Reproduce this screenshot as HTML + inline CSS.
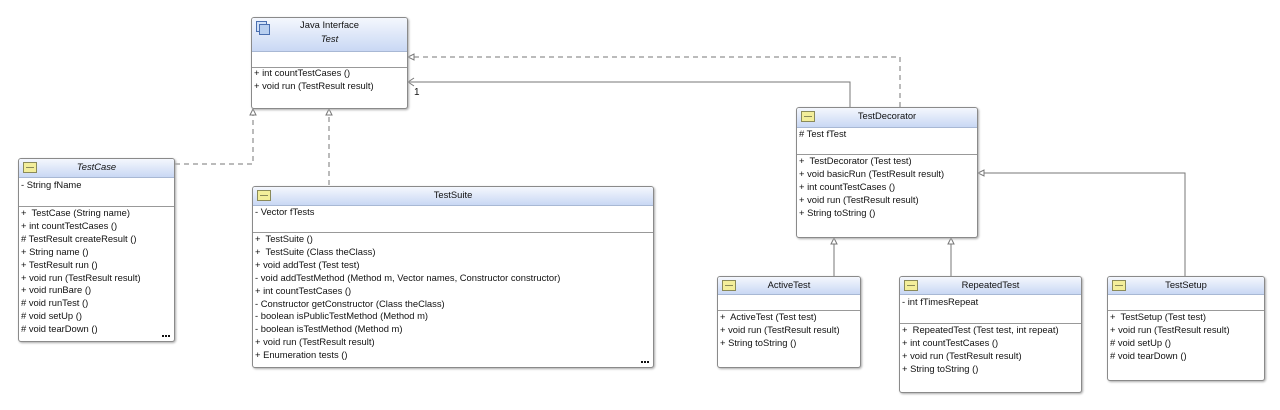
<!DOCTYPE html>
<html><head><meta charset="utf-8"><style>
body{margin:0;width:1280px;height:410px;background:#fff;position:relative;overflow:hidden;font-family:"Liberation Sans",Arial,sans-serif;font-size:9.4px;color:#111}
.b{position:absolute;border:1px solid #8a8a8a;border-radius:3px;background:#fff;box-shadow:1px 1px 2px #aaa;box-sizing:border-box;overflow:hidden}
.h{position:absolute;left:0;right:0;top:0;background:linear-gradient(#f4f7fd,#c9d8f4);border-bottom:1px solid #a8b8d4;text-align:center}
.ic{position:absolute;left:4px;top:3px;width:12px;height:9px;background:#f3ee9a;border:1px solid #8a8a5a}
.ic:after{content:"";position:absolute;left:2px;right:2px;top:4px;height:1px;background:#8a8a5a}
.s{position:absolute;left:0;right:0;border-top:1px solid #999}
.r{position:absolute;left:2px;line-height:12.9px;white-space:pre}
.d{position:absolute;right:4px;bottom:4px;width:2px;height:2px;background:#111;box-shadow:-3px 0 #111,-6px 0 #111}
</style></head><body>
<svg width="1280" height="410" style="position:absolute;left:0;top:0">
<g fill="none" stroke="#777" stroke-width="1">
<path d="M175 164H253V112" stroke-dasharray="5,4"/>
<path d="M329 185V112" stroke-dasharray="5,4"/>
<path d="M900 107V57H411" stroke-dasharray="5,4"/>
<path d="M850 107V82H408"/>
<path d="M414 78L408 82L414 86"/>
<path d="M834 276V241"/><path d="M951 276V241"/>
<path d="M1185 276V173H981"/>
</g>
<g fill="#fff" stroke="#777">
<path d="M253 109L250 115H256Z"/><path d="M329 109L326 115H332Z"/>
<path d="M408 57L414 54V60Z"/>
<path d="M834 238L831 244H837Z"/><path d="M951 238L948 244H954Z"/>
<path d="M978 173L984 170V176Z"/>
</g>
<text x="414" y="95" font-size="10" font-family="Liberation Sans" fill="#111">1</text>
</svg>

<div class="b" style="left:251px;top:17px;width:157px;height:92px">
<div class="h" style="height:33px"><div style="position:absolute;left:4px;top:3px;width:9px;height:9px;border:1px solid #4a6fb0;background:#cfe0f8"></div><div style="position:absolute;left:7px;top:6px;width:9px;height:9px;border:1px solid #4a6fb0;background:#b8cff0"></div><div style="line-height:14px;margin-top:0px">Java Interface</div><div style="font-style:italic;line-height:14px">Test</div></div>
<div class="s" style="top:49px"></div>
<div class="r" style="top:49px">+ int countTestCases ()
+ void run (TestResult result)</div></div>

<div class="b" style="left:18px;top:158px;width:157px;height:184px">
<div class="h" style="height:18px"><div class="ic"></div><div style="font-style:italic;line-height:16px">TestCase</div></div>
<div class="r" style="top:20px">- String fName</div>
<div class="s" style="top:47px"></div>
<div class="r" style="top:48px">+  TestCase (String name)
+ int countTestCases ()
# TestResult createResult ()
+ String name ()
+ TestResult run ()
+ void run (TestResult result)
+ void runBare ()
# void runTest ()
# void setUp ()
# void tearDown ()</div><div class="d"></div></div>

<div class="b" style="left:252px;top:186px;width:402px;height:182px">
<div class="h" style="height:18px"><div class="ic"></div><div style="line-height:16px">TestSuite</div></div>
<div class="r" style="top:19px">- Vector fTests</div>
<div class="s" style="top:45px"></div>
<div class="r" style="top:46px">+  TestSuite ()
+  TestSuite (Class theClass)
+ void addTest (Test test)
- void addTestMethod (Method m, Vector names, Constructor constructor)
+ int countTestCases ()
- Constructor getConstructor (Class theClass)
- boolean isPublicTestMethod (Method m)
- boolean isTestMethod (Method m)
+ void run (TestResult result)
+ Enumeration tests ()</div><div class="d"></div></div>

<div class="b" style="left:796px;top:107px;width:182px;height:131px">
<div class="h" style="height:19px"><div class="ic"></div><div style="line-height:16px">TestDecorator</div></div>
<div class="r" style="top:20px"># Test fTest</div>
<div class="s" style="top:46px"></div>
<div class="r" style="top:47px">+  TestDecorator (Test test)
+ void basicRun (TestResult result)
+ int countTestCases ()
+ void run (TestResult result)
+ String toString ()</div></div>

<div class="b" style="left:717px;top:276px;width:144px;height:92px">
<div class="h" style="height:17px"><div class="ic"></div><div style="line-height:16px">ActiveTest</div></div>
<div class="s" style="top:33px"></div>
<div class="r" style="top:34px">+  ActiveTest (Test test)
+ void run (TestResult result)
+ String toString ()</div></div>

<div class="b" style="left:899px;top:276px;width:183px;height:117px">
<div class="h" style="height:17px"><div class="ic"></div><div style="line-height:16px">RepeatedTest</div></div>
<div class="r" style="top:19px">- int fTimesRepeat</div>
<div class="s" style="top:46px"></div>
<div class="r" style="top:47px">+  RepeatedTest (Test test, int repeat)
+ int countTestCases ()
+ void run (TestResult result)
+ String toString ()</div></div>

<div class="b" style="left:1107px;top:276px;width:158px;height:105px">
<div class="h" style="height:17px"><div class="ic"></div><div style="line-height:16px">TestSetup</div></div>
<div class="s" style="top:33px"></div>
<div class="r" style="top:34px">+  TestSetup (Test test)
+ void run (TestResult result)
# void setUp ()
# void tearDown ()</div></div>
</body></html>
